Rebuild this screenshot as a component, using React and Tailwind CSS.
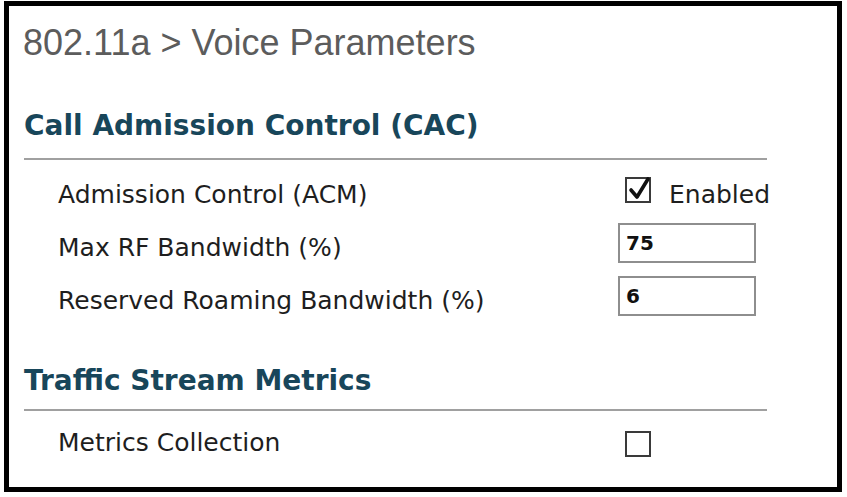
import React from "react";

function Check({ checked }) {
  return (
    <span className="relative w-[26px] h-[26px] border-2 border-[#3a3a3a] bg-white block">
      {checked && (
        <svg className="absolute -top-[3px] left-[1px]" width="24" height="26" viewBox="0 0 24 26">
          <path d="M3 14 L9 21 L20 3" fill="none" stroke="#111" strokeWidth="3.6" strokeLinejoin="round" strokeLinecap="round" />
        </svg>
      )}
    </span>
  );
}

function Field({ value }) {
  return (
    <div className="w-[138px] h-[40px] border-2 border-[#8e8e8e] px-[6px] flex items-center text-[20px] font-bold text-[#111]">
      {value}
    </div>
  );
}

function Row({ label, children }) {
  return (
    <div className="flex items-center h-[53px] pl-[35px]">
      <div className="w-[560px] text-[25px] text-[#1e1e1e]">{label}</div>
      <div className="flex items-center mb-[9px]">{children}</div>
    </div>
  );
}

function Section({ title, pad }) {
  return (
    <div className={"ml-[1px] border-b-2 border-[#a0a0a0] w-[743px] " + (pad ? "pb-[16px]" : "pb-[12px]")}>
      <h2 className="text-[28px] font-bold text-[#18465a] leading-[32px]">{title}</h2>
    </div>
  );
}

export default function App() {
  return (
    <div className="w-[847px] h-[497px] bg-white pt-[1px] pl-[4px]" style={{ fontFamily: "'DejaVu Sans', Verdana, sans-serif" }}>
      <div className="w-[838px] h-[491px] border-[5px] border-black pl-[14px] pt-[17px]">
        <h1 className="text-[36px] text-[#5c5c5c] leading-[40px]" style={{ fontFamily: "'Liberation Sans', Arial, sans-serif" }}>
          802.11a &gt; Voice Parameters
        </h1>
        <div className="mt-[47px]">
          <Section title="Call Admission Control (CAC)" pad />
        </div>
        <div className="mt-[8px]">
          <Row label="Admission Control (ACM)">
            <div className="ml-[7px] flex items-center gap-[18px]">
              <Check checked />
              <span className="text-[25px] text-[#1e1e1e] mt-[9px]">Enabled</span>
            </div>
          </Row>
          <Row label="Max RF Bandwidth (%)">
            <Field value="75" />
          </Row>
          <Row label="Reserved Roaming Bandwidth (%)">
            <Field value="6" />
          </Row>
        </div>
        <div className="mt-[38px]">
          <Section title="Traffic Stream Metrics" />
        </div>
        <div className="mt-[5px]">
          <Row label="Metrics Collection">
            <div className="ml-[7px] mt-[12px]">
              <Check />
            </div>
          </Row>
        </div>
      </div>
    </div>
  );
}
